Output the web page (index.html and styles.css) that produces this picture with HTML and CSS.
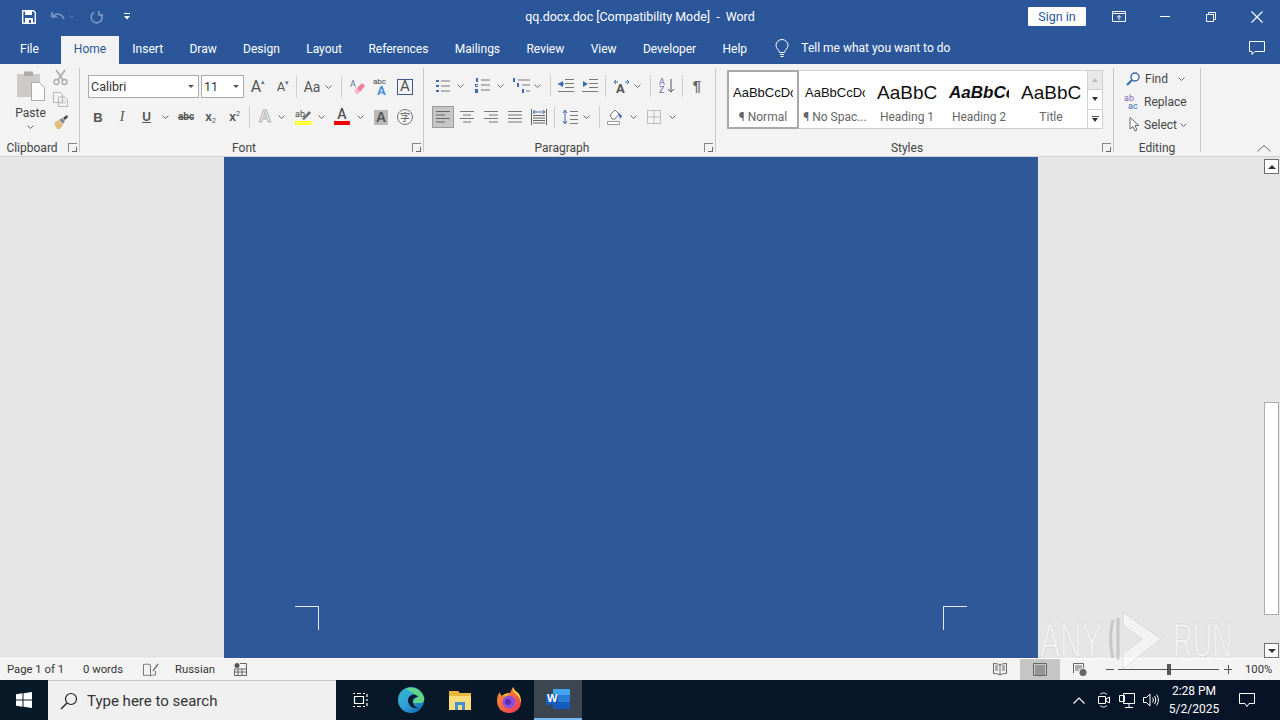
FILE: index.html
```html
<!DOCTYPE html>
<html lang="en">
<head>
    <meta charset="UTF-8">
    <title>qq.docx.doc [Compatibility Mode] - Word</title>
    <link rel="stylesheet" href="styles.css">
</head>
<body>
    <svg class="defs" width="0" height="0">
        <symbol id="chev" viewBox="0 0 7 4"><path d="M.5.5 3.5 3.5 6.5.5" fill="none" stroke="#666"/></symbol>
    </svg>

    <!-- title bar -->
    <header class="titlebar">
        <div class="qat">
            <svg width="14" height="14" viewBox="0 0 14 14"><path d="M.7.7h10.800l1.800 1.800v10.800H.7z" fill="none" stroke="#fff" stroke-width="1.400"/><path d="M3 1h7v4H3zM3 8h8v5H3z" fill="#fff"/><path d="M7 10h2v3H7z" fill="#2b579a"/></svg>
            <svg class="qat-undo" width="14" height="12" viewBox="0 0 14 12"><path d="M1 1v5h5M1.500 6C4 2 10 1.500 13 8" fill="none" stroke="#7d9ac6" stroke-width="1.600"/></svg>
            <svg class="qat-dim" width="5" height="3" viewBox="0 0 7 4"><path d="M.5.5 3.500 3.500 6.500.5" fill="none" stroke="#7d9ac6"/></svg>
            <svg class="qat-redo" width="14" height="14" viewBox="0 0 14 14"><path d="M4 2.500A5.500 5.500 0 1 0 11 4M9 1v4h4" fill="none" stroke="#7d9ac6" stroke-width="1.600"/></svg>
            <svg class="qat-more" width="6" height="7" viewBox="0 0 6 7"><path d="M0 0h6v1H0zM0 3h6L3 6.500z" fill="#fff"/></svg>
        </div>
        <div class="doc-title">qq.docx.doc [Compatibility Mode]&nbsp; -&nbsp; Word</div>
        <div class="win-controls">
            <button class="signin">Sign in</button>
            <svg width="14" height="11" viewBox="0 0 14 11"><path d="M.5.5h13v10H.5zM.5 2.500h13M7 9V4.500M5 6.500l2-2 2 2" fill="none" stroke="#fff"/></svg>
            <svg class="ctl-min" width="10" height="1" viewBox="0 0 10 1"><path d="M0 .5h10" stroke="#fff"/></svg>
            <svg class="ctl-restore" width="10" height="10" viewBox="0 0 10 10"><path d="M.5 2.500h7v7h-7zM2.500 2.500v-2h7v7h-2" fill="none" stroke="#fff"/></svg>
            <svg class="ctl-close" width="12" height="12" viewBox="0 0 12 12"><path d="M.5.5l11 11M11.500.5l-11 11" stroke="#fff" stroke-width="1.100"/></svg>
        </div>
    </header>

    <!-- tabs -->
    <nav class="tabs">
        <span class="tab tab-file">File</span>
        <span class="tab active">Home</span>
        <span class="tab">Insert</span>
        <span class="tab">Draw</span>
        <span class="tab">Design</span>
        <span class="tab">Layout</span>
        <span class="tab">References</span>
        <span class="tab">Mailings</span>
        <span class="tab">Review</span>
        <span class="tab">View</span>
        <span class="tab">Developer</span>
        <span class="tab">Help</span>
        <svg class="bulb" width="14" height="18" viewBox="0 0 14 18"><path d="M4.500 12.500C4 9.500 1 8.500 1 5.500a6 6 0 0 1 12 0c0 3-3 4-3.500 7zM5 14.500h4M5.500 16.500h3" fill="none" stroke="#fff"/></svg>
        <span class="tell">Tell me what you want to do</span>
        <svg class="comment" width="16" height="15" viewBox="0 0 16 15"><path d="M.5.500h15v10H6l-3 3v-3H.5z" fill="none" stroke="#fff"/></svg>
    </nav>

    <!-- ribbon -->
    <section class="ribbon">
        <div class="group g-clipboard">
            <div class="clip-body">
                <div class="paste">
                    <svg width="30" height="31" viewBox="0 0 30 31"><path d="M1 4h23v23H1z" fill="#cdcbc9"/><path d="M8 1.500h9V6H8z" fill="#aeaba8"/><path d="M15.500 12.500h8l5 5v13h-13z" fill="#fbfbfb" stroke="#aaa"/></svg>
                    <span class="paste-label">Paste</span>
                    <svg class="paste-chev" width="7" height="4"><use href="#chev"/></svg>
                </div>
                <div class="clip-tools">
                    <svg width="15" height="16" viewBox="0 0 15 16"><path d="M3 1l7 10M12 1 5 11" stroke="#a8a8a8" stroke-width="1.500"/><circle cx="3.500" cy="13" r="2.500" fill="none" stroke="#a8a8a8" stroke-width="1.300"/><circle cx="11.500" cy="13" r="2.500" fill="none" stroke="#a8a8a8" stroke-width="1.300"/></svg>
                    <svg width="15" height="15" viewBox="0 0 15 15"><path d="M.5.500h7l2 2v8h-9zM5.500 5h6l3 3v6.500h-9z" fill="#f3f3f3" stroke="#b5b5b5"/><path d="M7.500 9h5M7.500 11h5" stroke="#c8c8c8"/></svg>
                    <svg width="16" height="15" viewBox="0 0 16 15"><path d="M1 9l4-3 5 5-3 4H4z" fill="#e3bd7a"/><path d="M6 6l3-2 3 3-2 3z" fill="#8a8a8a"/><path d="M10 4l4-3 1 2-3 3z" fill="#444"/></svg>
                </div>
            </div>
            <div class="group-label"><span>Clipboard</span><i class="launcher"></i></div>
        </div>

        <div class="group g-font">
            <div class="rows">
                <div class="row row-font1">
                    <div class="combo combo-font"><span>Calibri</span><b class="arrow"></b></div>
                    <div class="combo combo-size m2"><span>11</span><b class="arrow"></b></div>
                    <span class="ico a-big m6">A<sup>▴</sup></span>
                    <span class="ico a-small m9">A<sup>▾</sup></span>
                    <i class="sep m5"></i>
                    <span class="ico aa m7">Aa</span>
                    <svg class="m5" width="7" height="4"><use href="#chev"/></svg>
                    <i class="sep m9"></i>
                    <svg class="m8" width="15" height="16" viewBox="0 0 15 16"><path d="M7 9l5-5 3 3-5 6H8z" fill="#ee7f9e"/><path d="M4 11l3-2 3 4-2 2H6z" fill="#f4b9ca"/><text x="0" y="8" class="svg-label" fill="#5b6f9c">A</text></svg>
                    <svg class="m8" width="15" height="17" viewBox="0 0 15 17"><text x="0" y="6" class="svg-mini" fill="#444">abc</text><text x="4" y="17" class="svg-bluea" fill="#4a90d9">A</text></svg>
                    <span class="ico a-box m9">A</span>
                </div>
                <div class="row row-font2">
                    <span class="ico t-b">B</span>
                    <span class="ico t-i m15">I</span>
                    <span class="ico t-u m15">U</span>
                    <svg class="m10" width="7" height="4"><use href="#chev"/></svg>
                    <span class="ico t-s m9">abc</span>
                    <span class="ico t-x m10">x<sub>2</sub></span>
                    <span class="ico t-x m11">x<sup>2</sup></span>
                    <i class="sep m8"></i>
                    <span class="ico t-fx m8">A</span>
                    <svg class="m6" width="7" height="4"><use href="#chev"/></svg>
                    <svg class="m10" width="17" height="16" viewBox="0 0 17 16"><text x="0" y="8" class="svg-small" fill="#444">ab</text><path d="M7 10l7-8 2 2-7 7z" fill="#6b6b6b"/><path d="M0 12h17v4H0z" fill="#ffff3c"/></svg>
                    <svg class="m6" width="7" height="4"><use href="#chev"/></svg>
                    <span class="ico t-color m9">A</span>
                    <svg class="m7" width="7" height="4"><use href="#chev"/></svg>
                    <span class="ico t-shade m10">A</span>
                    <span class="ico t-circle m9">字</span>
                </div>
            </div>
            <div class="group-label"><span>Font</span><i class="launcher"></i></div>
        </div>

        <div class="group g-para">
            <div class="rows">
                <div class="row row-para1">
                    <svg width="14" height="14" viewBox="0 0 14 14"><path d="M0 1h3v2H0zM0 6h3v2H0zM0 11h3v2H0z" fill="#3c6bb0"/><path d="M5 2h9M5 7h9M5 12h9" stroke="#777"/></svg>
                    <svg class="m7" width="7" height="4"><use href="#chev"/></svg>
                    <svg class="m11" width="15" height="15" viewBox="0 0 15 15"><path d="M1 0h2v4H1zM0 6h3v1H1v1h2v1H0zM0 11h3v4H0z" fill="#3c6bb0"/><path d="M6 2h9M6 7h9M6 12h9" stroke="#777"/></svg>
                    <svg class="m7" width="7" height="4"><use href="#chev"/></svg>
                    <svg class="m9" width="17" height="15" viewBox="0 0 17 15"><path d="M0 0h2v4H0zM4 5h2v4H4zM9 11h2v4H9z" fill="#3c6bb0"/><path d="M5 2h12M9 7h8M13 13h4" stroke="#777"/></svg>
                    <svg class="m4" width="7" height="4"><use href="#chev"/></svg>
                    <i class="sep m9"></i>
                    <svg class="m7" width="16" height="13" viewBox="0 0 16 13"><path d="M7 .5h9M7 4.500h9M7 8.500h9M0 12.500h16" stroke="#777"/><path d="M5 2v6L0 5z" fill="#3c6bb0"/><path d="M0 5h6" stroke="#3c6bb0"/></svg>
                    <svg class="m8" width="16" height="13" viewBox="0 0 16 13"><path d="M7 .5h9M7 4.500h9M7 8.500h9M0 12.500h16" stroke="#777"/><path d="M1 2v6l5-3z" fill="#3c6bb0"/></svg>
                    <i class="sep m7"></i>
                    <svg class="m7" width="17" height="14" viewBox="0 0 17 14"><text x="3" y="14" class="svg-bluea" fill="#555">A</text><path d="M1 3h4M12 3h4M1 3l2-2M1 3l2 2M16 3l-2-2M16 3l-2 2" stroke="#3c6bb0" fill="none"/></svg>
                    <svg class="m4" width="7" height="4"><use href="#chev"/></svg>
                    <i class="sep m9"></i>
                    <svg class="m8" width="16" height="16" viewBox="0 0 16 16"><text x="0" y="7" class="svg-small" fill="#8364b5">A</text><text x="0" y="15" class="svg-small" fill="#8364b5">Z</text><path d="M12 1v13M9 11l3 3 3-3" fill="none" stroke="#555"/></svg>
                    <i class="sep m7"></i>
                    <span class="ico pilcrow m8">¶</span>
                </div>
                <div class="row row-para2">
                    <span class="align-on"><svg width="14" height="12" viewBox="0 0 14 12"><path d="M0 .5h14M0 4h9M0 7.500h14M0 11h9" stroke="#666"/></svg></span>
                    <svg class="m6" width="14" height="12" viewBox="0 0 14 12"><path d="M0 .5h14M3 4h8M0 7.500h14M3 11h8" stroke="#777"/></svg>
                    <svg class="m10" width="14" height="12" viewBox="0 0 14 12"><path d="M0 .5h14M5 4h9M0 7.500h14M5 11h9" stroke="#777"/></svg>
                    <svg class="m10" width="14" height="12" viewBox="0 0 14 12"><path d="M0 .5h14M0 4h14M0 7.500h14M0 11h14" stroke="#777"/></svg>
                    <svg class="m9" width="16" height="16" viewBox="0 0 16 16"><path d="M.5 0v16M15.500 0v16M2 6.500h12M2 9h12M2 11.500h12M2 14h12" fill="none" stroke="#666"/><path d="M2 3h12M4 1 2 3l2 2M12 1l2 2-2 2" fill="none" stroke="#3c6bb0"/></svg>
                    <i class="sep m7"></i>
                    <svg class="m7" width="16" height="16" viewBox="0 0 16 16"><path d="M3 1v14M1 4l2-3 2 3M1 12l2 3 2-3" fill="none" stroke="#3c6bb0"/><path d="M8 2.500h8M8 6.500h8M8 10.500h8M8 14.500h8" stroke="#777"/></svg>
                    <svg class="m5" width="7" height="4"><use href="#chev"/></svg>
                    <i class="sep m9"></i>
                    <svg class="m7" width="16" height="16" viewBox="0 0 16 16"><path d="M3 6l5-5 4 4-4 5H5z" fill="#fff" stroke="#777"/><path d="M11 3l4 4-2 3z" fill="#3c6bb0"/><path d="M.5 12.500h12v3H.5z" fill="#fff" stroke="#999"/></svg>
                    <svg class="m7" width="7" height="4"><use href="#chev"/></svg>
                    <svg class="m10" width="14" height="14" viewBox="0 0 14 14"><path d="M.5.500h13v13H.5zM7 .5v13M.5 7h13" fill="none" stroke="#8a8a8a" stroke-dasharray="1 1"/></svg>
                    <svg class="m8" width="7" height="4"><use href="#chev"/></svg>
                </div>
            </div>
            <div class="group-label"><span>Paragraph</span><i class="launcher"></i></div>
        </div>

        <div class="group g-styles">
            <div class="gallery">
                <div class="style-item selected"><span class="pv pv-normal">AaBbCcDc</span><span class="cap">¶ Normal</span></div>
                <div class="style-item"><span class="pv pv-normal">AaBbCcDc</span><span class="cap">¶ No Spac...</span></div>
                <div class="style-item"><span class="pv pv-h1">AaBbC</span><span class="cap">Heading 1</span></div>
                <div class="style-item"><span class="pv pv-h2">AaBbCc</span><span class="cap">Heading 2</span></div>
                <div class="style-item"><span class="pv pv-h1">AaBbC</span><span class="cap">Title</span></div>
                <div class="gallery-scroll">
                    <span class="gs-btn gs-off"><b class="gs-up"></b></span>
                    <span class="gs-btn"><b class="gs-down"></b></span>
                    <span class="gs-btn gs-more"><b class="gs-down"></b></span>
                </div>
            </div>
            <div class="group-label"><span>Styles</span><i class="launcher"></i></div>
        </div>

        <div class="group g-edit">
            <div class="edit-list">
                <div class="edit-row row-find">
                    <svg width="14" height="14" viewBox="0 0 14 14"><circle cx="9" cy="5" r="4" fill="#fff" stroke="#3c6bb0" stroke-width="1.500"/><path d="M6 8 1 13" stroke="#3c6bb0" stroke-width="2.200"/></svg>
                    <span>Find</span>
                    <svg class="find-chev" width="7" height="4"><use href="#chev"/></svg>
                </div>
                <div class="edit-row row-replace">
                    <svg width="16" height="15" viewBox="0 0 16 15"><text x="0" y="7" class="svg-small" fill="#8364b5">ab</text><text x="4" y="15" class="svg-small" fill="#3c6bb0">ac</text></svg>
                    <span>Replace</span>
                </div>
                <div class="edit-row row-select">
                    <svg width="11" height="15" viewBox="0 0 11 15"><path d="M1 .5v11.500l3-2.500 2 4.500 2-1-2-4.500h4z" fill="#fff" stroke="#666"/></svg>
                    <span>Select</span>
                    <svg class="select-chev" width="7" height="4"><use href="#chev"/></svg>
                </div>
            </div>
            <div class="group-label"><span>Editing</span></div>
        </div>

        <svg class="collapse" width="14" height="7" viewBox="0 0 14 7"><path d="M.5 6.500 7 .5l6.500 6" fill="none" stroke="#666"/></svg>
    </section>

    <!-- document -->
    <main class="workspace">
        <div class="doc-scroll">
            <div class="page">
                <i class="crop crop-left"></i>
                <i class="crop crop-right"></i>
            </div>
        </div>
        <div class="vscroll">
            <span class="vs-btn"><b class="gs-up"></b></span>
            <span class="vs-thumb"></span>
            <span class="vs-btn vs-down"><b class="gs-down"></b></span>
        </div>
    </main>

    <!-- status bar -->
    <footer class="statusbar">
        <span class="st-page">Page 1 of 1</span>
        <span class="st-words">0 words</span>
        <svg class="st-proof" width="16" height="14" viewBox="0 0 16 14"><path d="M7.500 2C6 1 3 1 .5 1.500v11C3 12 6 12 7.500 13c1-.7 2.500-1 5-1V8M7.500 2v11" fill="none" stroke="#777"/><path d="M10 8l5-7" stroke="#777" stroke-width="1.500"/></svg>
        <span class="st-lang">Russian</span>
        <svg class="st-macro" width="13" height="13" viewBox="0 0 13 13"><circle cx="3" cy="2.500" r="2.500" fill="#555"/><path d="M6 .5h6.500v12H.5V6h12M4 6v6.500M8 6v6.500M.5 9h12" fill="none" stroke="#666"/></svg>
        <div class="st-right">
            <svg width="14" height="13" viewBox="0 0 14 13"><path d="M7 2C5 .8 3 .5.5.5v10c2.500 0 4.500.3 6.500 1.500 2-1.200 4-1.500 6.500-1.500V.5C11 .5 9 .8 7 2zM7 2v10M2 3h3M2 5h3M2 7h3M9 3h3M9 5h3M9 7h3" fill="none" stroke="#666"/></svg>
            <span class="view-on"><svg width="14" height="13" viewBox="0 0 14 13"><path d="M.5.500h13v12H.5zM2 3h10M2 5h10M2 7h10M2 9h10M2 11h10" fill="none" stroke="#666"/></svg></span>
            <svg width="14" height="13" viewBox="0 0 14 13"><path d="M.5 10V.5h10v5M2 3h7M2 5h7M2 7h4" fill="none" stroke="#666"/><circle cx="10" cy="9.500" r="3.500" fill="#666"/></svg>
            <span class="zoom-minus"></span>
            <span class="zoom-track"><b class="zoom-thumb"></b></span>
            <span class="zoom-plus"></span>
            <span class="st-zoom">100%</span>
        </div>
    </footer>

    <!-- taskbar -->
    <div class="taskbar">
        <svg class="start" width="16" height="16" viewBox="0 0 16 16"><path d="M0 2.200 6.500 1.300v6.300H0zM7.500 1.200 16 0v7.600H7.500zM0 8.500h6.500v6.200L0 13.800zM7.500 8.500H16V16l-8.500-1.200z" fill="#fff"/></svg>
        <div class="search">
            <svg width="18" height="18" viewBox="0 0 18 18"><circle cx="11" cy="7" r="5.500" fill="none" stroke="#222" stroke-width="1.200"/><path d="M7 11 1 17" stroke="#222" stroke-width="1.400"/></svg>
            <span>Type here to search</span>
        </div>
        <svg class="tb-view" width="16" height="16" viewBox="0 0 16 16"><path d="M2.500 4.500h9v7h-9zM1 1.500h2M5 1.500h4M11 1.500h2M1 14.500h2M5 14.500h4M11 14.500h2M15 2v3M15 7v2M15 11v3" fill="none" stroke="#fff" stroke-width="1.200"/></svg>
        <svg class="tb-edge" width="26" height="26" viewBox="0 0 26 26"><defs><linearGradient id="eg" x1="0" y1="0" x2="1" y2="1"><stop offset="0" stop-color="#36b8c8"/><stop offset=".5" stop-color="#2f9fd8"/><stop offset="1" stop-color="#0c5fb0"/></linearGradient></defs><circle cx="13" cy="13" r="13" fill="url(#eg)"/><path d="M8 2c7-3 15 0 18 8 1 3 0 5-2 6H15c0-3 3-5 5-6-2-3-6-4-12-8z" fill="#5fd38a"/><path d="M15 16c-1-3 1-6 5-6-1-2-4-3-6-2-4 1-5 6-3 9 2 4 6 5 10 4-3 0-5-2-6-5z" fill="#0a1a2a"/></svg>
        <svg class="tb-folder" width="22" height="20" viewBox="0 0 22 20"><path d="M0 1h9l2 2h11v17H0z" fill="#e9b83e"/><path d="M0 6h22v14H0z" fill="#fbdd7e"/><path d="M6 12h10v8H6z" fill="#3d93d1"/><path d="M9 15h4v5H9z" fill="#fbdd7e"/></svg>
        <svg class="tb-fox" width="24" height="26" viewBox="0 0 24 26"><defs><linearGradient id="fg" x1="0" y1="0" x2="1" y2="1"><stop offset="0" stop-color="#ff9a2e"/><stop offset="1" stop-color="#f0325a"/></linearGradient></defs><path d="M16 0c0 3 2 4 4 6l4 9c0 6-5 11-12 11S0 21 0 14C0 10 1 7 3 5c0 2 1 3 2 4 2-2 5-3 8-3 1-2 2-4 3-6z" fill="url(#fg)"/><path d="M16 0c-1 3 0 5 3 7 2 2 4 4 4 7l1 1c0-4-1-8-4-10-2-1-3-3-4-5z" fill="#ffd23d"/><path d="M13 6c-3 0-6 1-8 3 2 0 4 0 5 1z" fill="#ffb52e"/><circle cx="12" cy="15" r="6.500" fill="#8f4fd8"/><circle cx="11" cy="15" r="3" fill="#5a2bb5"/></svg>
        <div class="tb-word">
            <svg width="24" height="20" viewBox="0 0 24 20"><path d="M7 0h17v20H7z" fill="#2b7cd3"/><path d="M7 0h17v6H7z" fill="#41a5ee"/><path d="M7 13h17v7H7z" fill="#185abd"/><path d="M0 5h12v11H0z" fill="#185abd"/></svg>
            <span class="word-w">W</span>
        </div>
        <div class="tray">
            <svg class="tr-up" width="12" height="7" viewBox="0 0 12 7"><path d="M.5 6.500 6 1l5.500 5.500" fill="none" stroke="#fff" stroke-width="1.200"/></svg>
            <svg class="tr-meet" width="12" height="16" viewBox="0 0 12 16"><path d="M2 2.500C4 .5 7 .5 9 2.500M2 13.500c2 2 5 2 7 0M.5 4.500h7v7h-7zM8 7l3.500-2v6L8 9z" fill="none" stroke="#fff"/></svg>
            <svg class="tr-net" width="16" height="15" viewBox="0 0 16 15"><path d="M4.500 .5h11v10h-11zM.5 2.500h5v6h-5zM10 11v3M6 14.500h8" fill="#07142a" stroke="#fff"/></svg>
            <svg class="tr-vol" width="16" height="14" viewBox="0 0 16 14"><path d="M.5 4.500h3L7 1v12L3.500 9.500h-3zM9.500 4.500c1 1.500 1 3.500 0 5M11.500 3c1.700 2.500 1.700 5.500 0 8M13.500 1.500c2.500 3.500 2.500 7.500 0 11" fill="none" stroke="#fff"/></svg>
            <div class="clock"><span>2:28 PM</span><span>5/2/2025</span></div>
            <svg class="tr-note" width="16" height="14" viewBox="0 0 16 14"><path d="M.5.500h15v10H10l-2 3-2-3H.5z" fill="none" stroke="#fff"/></svg>
        </div>
    </div>

    <!-- sandbox watermark -->
    <svg class="watermark" width="200" height="62" viewBox="0 0 200 62">
        <text x="2" y="49" textLength="62" lengthAdjust="spacingAndGlyphs">ANY</text>
        <path d="M75 12c-3 8-3 28 0 38M80 10v42" fill="none" stroke-width="3"/>
        <path d="M85 4l38 27-38 30V46l19-15-19-14z"/>
        <text x="135" y="49" textLength="59" lengthAdjust="spacingAndGlyphs">RUN</text>
    </svg>
</body>
</html>
```
FILE: styles.css
```css
* {
    box-sizing: border-box;
}

html, body {
    margin: 0;
    padding: 0;
}

body {
    width: 1280px;
    height: 720px;
    overflow: hidden;
    position: relative;
    font-family: Roboto, "Noto Sans", Arial, sans-serif;
    font-size: 12px;
    color: #444;
    background: #f3f3f3;
    display: flex;
    flex-direction: column;
}

.defs {
    position: absolute;
}

svg {
    flex: none;
    display: block;
    overflow: visible;
}

i, b {
    display: block;
    font-style: normal;
}

/* title bar */
.titlebar {
    height: 36px;
    flex: none;
    background: #2b579a;
    color: #fff;
    display: grid;
    grid-template-columns: 1fr auto 1fr;
    align-items: center;
    padding-bottom: 3px;
}

.qat {
    display: flex;
    align-items: center;
    padding-left: 22px;
}

.qat-undo { margin-left: 15px; }
.qat-dim { margin-left: 4px; }
.qat-redo { margin-left: 16px; }
.qat-more { margin-left: 20px; }

.doc-title {
    font-size: 12.4px;
    color: #fff;
}

.win-controls {
    display: flex;
    align-items: center;
    justify-content: flex-end;
}

.signin {
    width: 58px;
    height: 19px;
    margin-right: 26px;
    padding: 0;
    border: 0;
    border-radius: 1px;
    background: #fff;
    color: #2b579a;
    font-family: inherit;
    font-size: 12.5px;
}

.ctl-min { margin-left: 34px; }
.ctl-restore { margin-left: 36px; }
.ctl-close { margin-left: 35px; margin-right: 17px; }

/* tabs */
.tabs {
    height: 28px;
    flex: none;
    background: #2b579a;
    color: #fff;
    display: flex;
    align-items: center;
    padding-left: 6px;
}

.tab {
    height: 28px;
    padding: 0 13.2px;
    line-height: 26px;
    white-space: nowrap;
}

.tab-file {
    padding-left: 14px;
    padding-right: 22px;
}

.tab.active {
    background: #f3f3f3;
    color: #2b579a;
    padding: 0 13px;
}

.bulb {
    margin-left: 15px;
    margin-bottom: 2px;
}

.tell {
    margin-left: 12px;
    margin-bottom: 4px;
}

.comment {
    margin-left: auto;
    margin-right: 15px;
    margin-bottom: 4px;
}

/* ribbon */
.ribbon {
    height: 93px;
    flex: none;
    background: #f3f3f3;
    border-bottom: 1px solid #d2d2d2;
    display: flex;
    padding-top: 4px;
    position: relative;
}

.group {
    height: 84px;
    flex: none;
    display: flex;
    flex-direction: column;
    border-right: 1px solid #c8c8c8;
}

.g-clipboard { width: 80px; }
.g-font { width: 344px; }
.g-para { width: 292px; }
.g-styles { width: 398px; }
.g-edit { width: 87px; }

.group-label {
    height: 17px;
    flex: none;
    margin-top: auto;
    margin-bottom: -4px;
    display: flex;
    align-items: center;
    color: #444;
}

.group-label span {
    flex: 1;
    text-align: center;
}

.launcher {
    width: 9px;
    height: 9px;
    margin: 0 2px 0 4px;
    border-left: 1px solid #888;
    border-top: 1px solid #888;
    position: relative;
}

.launcher::after {
    content: "";
    position: absolute;
    right: 0;
    bottom: 0;
    width: 4px;
    height: 4px;
    border-right: 1px solid #666;
    border-bottom: 1px solid #666;
}

.rows {
    display: flex;
    flex-direction: column;
    padding-top: 7px;
    height: 60px;
    flex: none;
}

.row {
    display: flex;
    align-items: center;
    height: 23px;
    flex: none;
}

.row-font1 { padding-left: 8px; }
.row-font2 { padding-left: 13px; margin-top: 8px; height: 22px; }
.row-para1 { padding-left: 12px; height: 21px; }
.row-para2 { padding-left: 8px; margin-top: 10px; height: 22px; }

.m2 { margin-left: 2px; }
.m4 { margin-left: 4px; }
.m5 { margin-left: 5px; }
.m6 { margin-left: 6px; }
.m7 { margin-left: 7px; }
.m8 { margin-left: 8px; }
.m9 { margin-left: 9px; }
.m10 { margin-left: 10px; }
.m11 { margin-left: 11px; }
.m15 { margin-left: 15px; }

.sep {
    width: 1px;
    height: 22px;
    flex: none;
    background: #d0d0d0;
}

.combo {
    height: 23px;
    flex: none;
    background: #fff;
    border: 1px solid #ababab;
    display: flex;
    align-items: center;
    justify-content: space-between;
    padding: 0 4px 0 2px;
    font-size: 12.5px;
    color: #333;
}

.combo-font { width: 111px; }
.combo-size { width: 43px; }

.arrow {
    width: 0;
    height: 0;
    border-left: 3px solid transparent;
    border-right: 3px solid transparent;
    border-top: 3px solid #555;
}

.ico {
    display: flex;
    justify-content: center;
    align-items: center;
    flex: none;
    line-height: 1;
    color: #555;
    position: relative;
}

.ico sup, .ico sub {
    line-height: 1;
}

.a-big { width: 16px; font-size: 16px; }
.a-big sup, .a-small sup { font-size: 7px; color: #5b6f9c; align-self: flex-start; }
.a-small { width: 16px; font-size: 13px; }
.aa { width: 16px; font-size: 14px; color: #555; }

.a-box {
    width: 16px;
    height: 16px;
    border: 1px solid #3c5a8a;
    font-size: 15px;
    color: #555;
}

.t-b { width: 10px; font: bold 13px "Liberation Sans", sans-serif; color: #555; }
.t-i { width: 8px; font: italic 14px "Liberation Serif", serif; color: #555; }
.t-u { width: 11px; font: bold 12px "Liberation Sans", sans-serif; color: #555; text-decoration: underline; }
.t-s { width: 16px; font-size: 10px; font-weight: 700; text-decoration: line-through; color: #555; }
.t-x { width: 13px; font: bold 12px "Liberation Sans", sans-serif; color: #555; }
.t-x sub, .t-x sup { font-size: 7px; font-weight: normal; align-self: flex-end; }
.t-x sup { align-self: flex-start; }
.t-fx { width: 14px; font: bold 17px "Liberation Sans", sans-serif; color: #f3f3f3; -webkit-text-stroke: 1px #b4b4b4; }
.t-color { width: 16px; height: 16px; font-size: 14px; font-weight: 500; color: #555; border-bottom: 4px solid #e00; align-items: flex-end; }
.t-shade { width: 14px; height: 15px; background: #b9b9b9; font: bold 14px "Liberation Sans", sans-serif; color: #555; }

.t-circle {
    width: 16px;
    height: 16px;
    border: 1px solid #777;
    border-radius: 50%;
    font-family: "Noto Sans CJK SC", sans-serif;
    font-size: 10px;
}

.pilcrow { width: 12px; font: bold 15px "Liberation Sans", sans-serif; color: #666; }

.svg-label, .svg-small { font: 9px Roboto, sans-serif; }
.svg-mini { font: 8px Roboto, sans-serif; }
.svg-bluea { font: bold 13px Roboto, sans-serif; }

.align-on {
    width: 22px;
    height: 22px;
    flex: none;
    background: #c6c6c6;
    border: 1px solid #9b9b9b;
    display: flex;
    align-items: center;
    justify-content: center;
}

/* clipboard */
.clip-body {
    display: flex;
    padding-left: 16px;
    padding-top: 2px;
    height: 60px;
    flex: none;
}

.paste {
    width: 29px;
    display: flex;
    flex-direction: column;
    align-items: center;
}

.paste-label {
    margin-top: 4px;
    line-height: 16px;
}

.paste-chev {
    margin-top: 4px;
}

.clip-tools {
    margin-left: 8px;
    margin-top: -1px;
    display: flex;
    flex-direction: column;
    gap: 7px;
}

/* style gallery */
.gallery {
    margin: 2px 0 0 11px;
    width: 376px;
    height: 59px;
    flex: none;
    background: #fff;
    border: 1px solid #d0d0d0;
    display: flex;
    position: relative;
}

.style-item {
    width: 72px;
    flex: none;
    display: flex;
    flex-direction: column;
    align-items: center;
    overflow: hidden;
    padding: 3px 6px 0;
}

.style-item.selected {
    margin: -1px 0 -1px -1px;
    border: 2px solid #a9a9a9;
    padding-top: 2px;
}

.pv {
    width: 60px;
    height: 36px;
    line-height: 38px;
    white-space: nowrap;
    overflow: hidden;
    color: #111;
    text-align: left;
    font-family: "Liberation Sans", sans-serif;
}

.pv-normal { font-size: 13px; }
.pv-h1 { font-size: 19px; }
.pv-h2 { font-size: 17px; font-style: italic; font-weight: bold; }

.cap {
    line-height: 14px;
    color: #666;
    white-space: nowrap;
}

.gallery-scroll {
    width: 15px;
    margin-left: auto;
    display: flex;
    flex-direction: column;
    border-left: 1px solid #d0d0d0;
}

.gs-btn {
    flex: 1;
    display: flex;
    align-items: center;
    justify-content: center;
    border-bottom: 1px solid #d0d0d0;
}

.gs-btn:last-child { border-bottom: 0; }
.gs-off { background: #e8e8e8; }

.gs-more {
    flex-direction: column;
    gap: 1px;
}

.gs-more::before {
    content: "";
    width: 7px;
    height: 1px;
    background: #555;
}

.gs-up, .gs-down {
    width: 0;
    height: 0;
    border-left: 3.5px solid transparent;
    border-right: 3.5px solid transparent;
}

.gs-up { border-bottom: 4px solid #333; }
.gs-down { border-top: 4px solid #333; }
.gs-off .gs-up { border-bottom-color: #bbb; }

/* editing */
.edit-list {
    display: flex;
    flex-direction: column;
    margin-top: -1px;
    height: 60px;
    flex: none;
}

.edit-row {
    height: 23px;
    flex: none;
    display: flex;
    align-items: center;
}

.row-find { padding-left: 12px; }
.row-find span { margin-left: 5px; }
.find-chev { margin-left: 10px; }
.row-replace { padding-left: 10px; }
.row-replace span { margin-left: 4px; }
.row-select { padding-left: 15px; }
.row-select span { margin-left: 4px; }
.select-chev { margin-left: 3px; }

.collapse {
    position: absolute;
    left: 1257px;
    top: 81px;
}

/* document */
.workspace {
    height: 501px;
    flex: none;
    display: flex;
    background: #e6e6e6;
}

.doc-scroll {
    flex: 1;
    padding-left: 224px;
}

.page {
    width: 814px;
    height: 100%;
    background: #2e5897;
    display: flex;
    justify-content: space-between;
    align-items: flex-end;
    padding: 0 71px 28px;
}

.crop {
    width: 24px;
    height: 24px;
    border-top: 1px solid #e6ebf3;
}

.crop-left { border-right: 1px solid #e6ebf3; }
.crop-right { border-left: 1px solid #e6ebf3; }

.vscroll {
    width: 16px;
    flex: none;
    display: flex;
    flex-direction: column;
    padding-top: 2px;
}

.vs-btn {
    width: 15px;
    height: 15px;
    flex: none;
    background: #fdfdfd;
    border: 1px solid #707070;
    display: flex;
    align-items: center;
    justify-content: center;
}

.vs-btn .gs-up, .vs-btn .gs-down {
    border-left-width: 4px;
    border-right-width: 4px;
}

.vs-thumb {
    width: 15px;
    height: 213px;
    flex: none;
    margin-top: 228px;
    background: #fff;
    border: 1px solid #ababab;
}

.vs-down {
    margin-top: 28px;
}

/* status bar */
.statusbar {
    height: 22px;
    flex: none;
    background: #f3f3f3;
    border-top: 1px solid #fff;
    display: flex;
    align-items: center;
    font-size: 11.3px;
    color: #333;
}

.st-page { margin-left: 7px; }
.st-words { margin-left: 19px; }
.st-proof { margin-left: 20px; }
.st-lang { margin-left: 16px; }
.st-macro { margin-left: 19px; }

.st-right {
    margin-left: auto;
    display: flex;
    align-items: center;
    height: 100%;
    padding-right: 8px;
}

.st-right > svg:first-child { margin-right: 13px; }

.view-on {
    width: 40px;
    height: 100%;
    background: #c6c6c6;
    display: flex;
    align-items: center;
    justify-content: center;
    margin-right: 13px;
}

.zoom-minus, .zoom-plus {
    width: 8px;
    height: 9px;
    position: relative;
}

.zoom-minus { margin-left: 19px; }
.zoom-plus { margin-right: 13px; }

.zoom-minus::before, .zoom-plus::before {
    content: "";
    position: absolute;
    left: 0;
    top: 4px;
    width: 8px;
    height: 1px;
    background: #555;
}

.zoom-plus::after {
    content: "";
    position: absolute;
    left: 4px;
    top: 0;
    width: 1px;
    height: 9px;
    background: #555;
}

.zoom-track {
    width: 101px;
    height: 1px;
    margin: 0 5px 0 4px;
    background: #555;
    display: flex;
    align-items: center;
    justify-content: center;
}

.zoom-thumb {
    width: 4px;
    height: 11px;
    flex: none;
    background: #555;
}

.st-zoom {
    width: 27px;
}

/* taskbar */
.taskbar {
    height: 40px;
    flex: none;
    background: linear-gradient(90deg, #081a28, #071428);
    color: #fff;
    display: flex;
    align-items: center;
}

.start { margin-left: 16px; }

.search {
    width: 288px;
    height: 40px;
    margin-left: 16px;
    background: #f0f0f0;
    border-top: 1px solid #c8c8c8;
    color: #333;
    display: flex;
    align-items: center;
    padding-left: 12px;
    font-size: 15px;
}

.search span { margin-left: 9px; }

.tb-view { margin-left: 16px; }
.tb-edge { margin-left: 30px; }
.tb-folder { margin-left: 25px; }
.tb-fox { margin-left: 26px; }

.tb-word {
    width: 48px;
    height: 40px;
    margin-left: 13px;
    background: #3b4650;
    border-bottom: 2px solid #76b9ed;
    display: flex;
    align-items: center;
    justify-content: center;
    position: relative;
}

.word-w {
    position: absolute;
    left: 13px;
    top: 12px;
    font: bold 11px "Liberation Sans", sans-serif;
    color: #fff;
}

.tray {
    margin-left: auto;
    display: flex;
    align-items: center;
}

.tr-meet { margin-left: 13px; }
.tr-net { margin-left: 9px; }
.tr-vol { margin-left: 8px; }

.clock {
    width: 70px;
    display: flex;
    flex-direction: column;
    align-items: center;
    line-height: 18px;
}

.tr-note { margin-left: 10px; margin-right: 25px; }

/* watermark */
.watermark {
    position: absolute;
    left: 1038px;
    top: 608px;
    font-family: "Liberation Sans", sans-serif;
    font-size: 49px;
    fill: #fff;
    fill-opacity: .5;
    stroke: #8c8c8c;
    stroke-opacity: .35;
    stroke-width: .6;
    pointer-events: none;
}
```
